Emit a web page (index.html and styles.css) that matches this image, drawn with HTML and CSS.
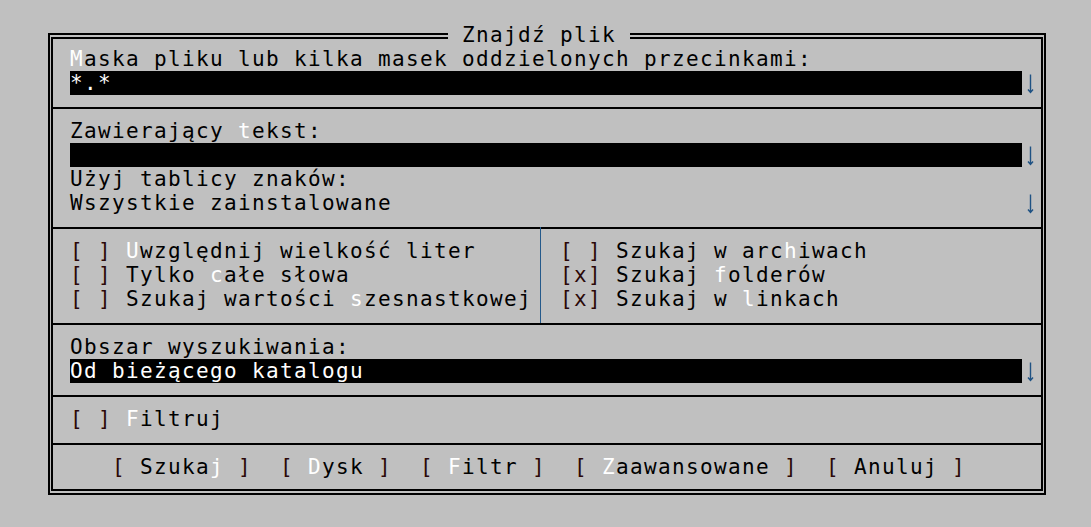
FILE: index.html
```html
<!DOCTYPE html>
<html lang="pl">
<head>
<meta charset="utf-8">
<title>Znajdź plik</title>
<link rel="stylesheet" href="styles.css">
</head>
<body>
<div class="dialog">
  <div class="title"> Znajdź plik </div>
  <div class="inner">
    <div class="row"><span class="hk">M</span>aska pliku lub kilka masek oddzielonych przecinkami:</div>
    <div class="row combo"><span class="field">*.*</span><svg class="arrow" viewBox="0 0 14 24" width="14" height="24"><path d="M8.5 3.5V21.5M6 18.5L8.5 21.5L11 18.5"/></svg></div>
    <div class="sep"></div>
    <div class="row">Zawierający <span class="hk">t</span>ekst:</div>
    <div class="row combo"><span class="field"></span><svg class="arrow" viewBox="0 0 14 24" width="14" height="24"><path d="M8.5 3.5V21.5M6 18.5L8.5 21.5L11 18.5"/></svg></div>
    <div class="row">Użyj tablicy znaków:</div>
    <div class="row combo"><span class="plain">Wszystkie zainstalowane</span><svg class="arrow" viewBox="0 0 14 24" width="14" height="24"><path d="M8.5 3.5V21.5M6 18.5L8.5 21.5L11 18.5"/></svg></div>
    <div class="sep"></div>
    <div class="checks">
      <div class="col-left">
        <div class="line"><span class="br">[ ]</span> <span class="hk">U</span>względnij wielkość liter</div>
        <div class="line"><span class="br">[ ]</span> Tylko <span class="hk">c</span>ałe słowa</div>
        <div class="line"><span class="br">[ ]</span> Szukaj wartości <span class="hk">s</span>zesnastkowej</div>
      </div>
      <div class="vdiv"></div>
      <div class="col-right">
        <div class="line"><span class="br">[ ]</span> Szukaj w arc<span class="hk">h</span>iwach</div>
        <div class="line"><span class="br">[x]</span> Szukaj <span class="hk">f</span>olderów</div>
        <div class="line"><span class="br">[x]</span> Szukaj w <span class="hk">l</span>inkach</div>
      </div>
    </div>
    <div class="sep"></div>
    <div class="row">Obszar wyszukiwania:</div>
    <div class="row combo"><span class="field">Od bieżącego katalogu</span><svg class="arrow" viewBox="0 0 14 24" width="14" height="24"><path d="M8.5 3.5V21.5M6 18.5L8.5 21.5L11 18.5"/></svg></div>
    <div class="sep"></div>
    <div class="row"><span class="br">[ ]</span> <span class="hk">F</span>iltruj</div>
    <div class="sep"></div>
    <div class="row buttons">   <span class="br">[</span> Szuka<span class="hk">j</span> <span class="br">]</span>  <span class="br">[</span> <span class="hk">D</span>ysk <span class="br">]</span>  <span class="br">[</span> <span class="hk">F</span>iltr <span class="br">]</span>  <span class="br">[</span> <span class="hk">Z</span>aawansowane <span class="br">]</span>  <span class="br">[</span> Anuluj <span class="br">]</span></div>
  </div>
</div>
</body>
</html>
```

FILE: styles.css
```css
html, body {
  margin: 0;
  padding: 0;
  background: #c0c0c0;
}

body {
  font-family: "DejaVu Sans Mono", monospace;
  font-size: 21px;
  line-height: 24px;
  color: #000;
  letter-spacing: calc(14px - 1ch);
  padding: 33px 0 0 48px;
}

.dialog {
  position: relative;
  box-sizing: border-box;
  width: 998px;
  height: 462px;
  border: 2px solid #000;
  padding: 2px 1px;
}

.title {
  position: absolute;
  top: -12px;
  left: 398px;
  height: 24px;
  line-height: 24px;
  white-space: pre;
  background: #c0c0c0;
  color: #000;
}

.inner {
  box-sizing: border-box;
  height: 454px;
  border: 2px solid #000;
  padding: 8px 0 10px 0;
}

.row {
  height: 24px;
  padding: 0 5px 0 17px;
  white-space: pre;
  overflow: hidden;
}

.combo {
  display: flex;
}

.field {
  display: block;
  width: 952px;
  height: 24px;
  background: #000;
  color: #fff;
  white-space: pre;
}

.plain {
  display: block;
  width: 952px;
  white-space: pre;
}

.arrow {
  display: block;
  flex: none;
  fill: none;
  stroke: #1f5283;
  stroke-width: 1.4;
}

.sep {
  box-sizing: border-box;
  height: 24px;
  padding-top: 12px;
}

.sep::before {
  content: "";
  display: block;
  height: 2px;
  background: #000;
}

.hk {
  color: #fff;
}

.br {
  color: #2a0808;
}

.checks {
  display: flex;
  height: 72px;
  padding: 0 5px 0 17px;
}

.col-left {
  width: 462px;
}

.col-right {
  padding-left: 14px;
}

.line {
  height: 24px;
  white-space: pre;
}

.vdiv {
  width: 14px;
  position: relative;
}

.vdiv::before {
  content: "";
  position: absolute;
  left: 8px;
  top: -12px;
  bottom: -12px;
  width: 1px;
  background: #24598a;
}
```
